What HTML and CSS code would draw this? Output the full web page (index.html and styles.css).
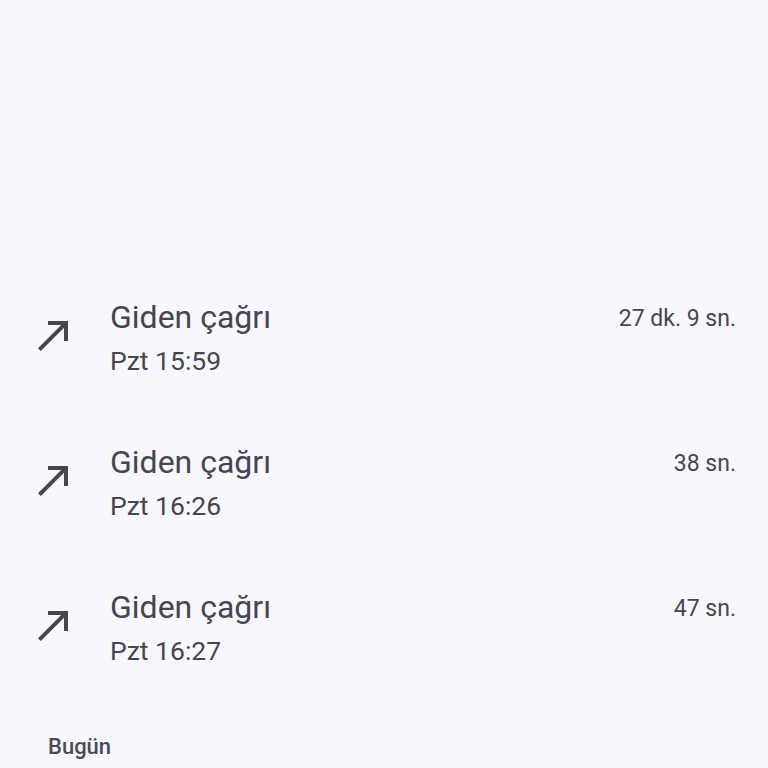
FILE: index.html
```html
<!DOCTYPE html>
<html lang="tr">
<head>
    <meta charset="UTF-8">
    <meta name="viewport" content="width=device-width, initial-scale=1.0">
    <title>Arama geçmişi</title>
    <link rel="stylesheet" href="styles.css">
</head>
<body>
    <main class="history">
        <ul class="callList">
            <li class="call">
                <svg class="callIcon" viewBox="0 0 24 24"><path d="M9 5v2h6.59L4 18.59 5.41 20 17 8.41V15h2V5z"/></svg>
                <div class="callInfo">
                    <p class="callTop"><span class="callTitle">Giden çağrı</span><span class="callDur">27 dk. 9 sn.</span></p>
                    <p class="callTime">Pzt 15:59</p>
                </div>
            </li>
            <li class="call">
                <svg class="callIcon" viewBox="0 0 24 24"><path d="M9 5v2h6.59L4 18.59 5.41 20 17 8.41V15h2V5z"/></svg>
                <div class="callInfo">
                    <p class="callTop"><span class="callTitle">Giden çağrı</span><span class="callDur">38 sn.</span></p>
                    <p class="callTime">Pzt 16:26</p>
                </div>
            </li>
            <li class="call">
                <svg class="callIcon" viewBox="0 0 24 24"><path d="M9 5v2h6.59L4 18.59 5.41 20 17 8.41V15h2V5z"/></svg>
                <div class="callInfo">
                    <p class="callTop"><span class="callTitle">Giden çağrı</span><span class="callDur">47 sn.</span></p>
                    <p class="callTime">Pzt 16:27</p>
                </div>
            </li>
        </ul>
        <h2 class="dayLabel">Bugün</h2>
    </main>
</body>
</html>
```

FILE: styles.css
```css
/* reset */
* {box-sizing: border-box;}
body, h2, ul, p {margin: 0; padding: 0;}
li {list-style: none;}
body {background: #f8f7fd; color: #46464f;
    font-family: Roboto, "Noto Sans", sans-serif;}

/* list */
.history {padding-top: 266px;}
.call {display: flex; align-items: center;
    height: 145px; padding: 0 32px 0 30px;}
.callIcon {width: 48px; height: 48px; margin-top: -7px;
    fill: #46464f; flex-shrink: 0;}
.callInfo {flex: 1; margin-left: 32px;}
.callTop {display: flex; justify-content: space-between; align-items: center;
    height: 44px;}
.callTitle {font-size: 32px;}
.callDur {font-size: 23px; margin-top: 4px;}
.callTime {font-size: 26.5px; line-height: 44px;}

/* day label */
.dayLabel {padding: 0 48px; margin-top: 32px;
    font-size: 22px; font-weight: 500; line-height: 28px; color: #4a4a52;}
```
